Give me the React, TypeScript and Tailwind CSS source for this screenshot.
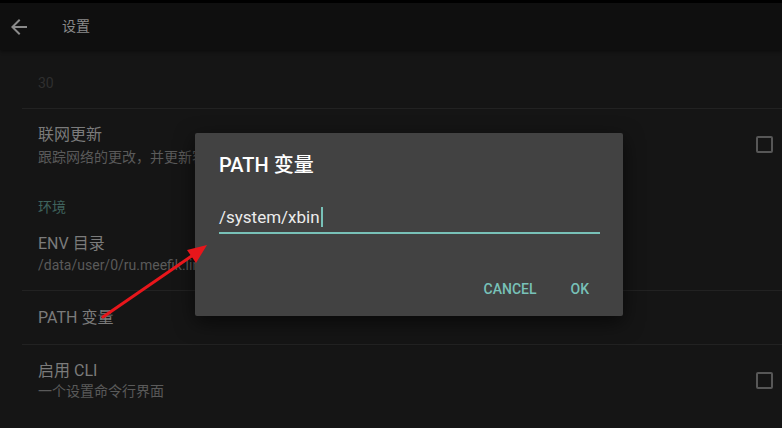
import React from 'react';

const rows = [
  { title: '联网更新', summary: '跟踪网络的更改，并更新容器配置', checkbox: true },
];

function Checkbox() {
  return <div className="mt-[27px] w-[17px] h-[17px] rounded-[2px] border-2 border-[#575757]"></div>;
}

export default function App() {
  return (
    <div className="relative w-[782px] h-[428px] overflow-hidden bg-[#151515] font-[Roboto,'Noto_Sans_CJK_SC',sans-serif]">
      {/* Toolbar */}
      <div className="h-[50px] border-t-[3px] border-black bg-[#0f0f0f] flex items-center shadow-[0_2px_3px_rgba(0,0,0,0.35)]">
        <svg className="ml-[7px]" width="24" height="24" viewBox="0 0 24 24" fill="#8a8a8a">
          <path d="M20 11H7.83l5.59-5.59L12 4l-8 8 8 8 1.41-1.41L7.83 13H20v-2z" />
        </svg>
        <span className="ml-[31px] text-[14px] text-[#8a8a8a]">设置</span>
      </div>

      {/* Preference list */}
      <div className="pl-[22px]">
        <div className="h-[58px] pl-[16px] pt-[23px] text-[14px] leading-[20px] text-[#2f2f2f]">30</div>
        <div className="h-px bg-[#222222]"></div>

        {rows.map((r) => (
          <div key={r.title} className="h-[75px] flex justify-between pr-[9px]">
            <div className="pl-[16px] pt-[16px]">
              <div className="text-[16px] leading-[20px] text-[#7b7b7b]">{r.title}</div>
              <div className="mt-[3px] w-[157px] overflow-hidden text-[14px] leading-[18px] text-[#5a5a5a] whitespace-nowrap">{r.summary}</div>
            </div>
            {r.checkbox && <Checkbox />}
          </div>
        ))}

        <div className="pl-[16px] pt-[14px] text-[14px] leading-[18px] text-[#3f635d]">环境</div>

        <div className="pl-[16px] pt-[18px] pb-[16px]">
          <div className="text-[16px] leading-[20px] text-[#7b7b7b]">ENV 目录</div>
          <div className="mt-[2px] w-[157px] overflow-hidden text-[14px] leading-[18px] text-[#5a5a5a] whitespace-nowrap">/data/user/0/ru.meefik.linuxdeploy/files/env</div>
        </div>
        <div className="h-px bg-[#222222]"></div>

        <div className="pl-[16px] pt-[17px] pb-[16px]">
          <div className="text-[16px] leading-[20px] text-[#7b7b7b]">PATH 变量</div>
        </div>
        <div className="h-px bg-[#222222]"></div>

        <div className="flex justify-between pr-[9px]">
          <div className="pl-[16px] pt-[16px]">
            <div className="text-[16px] leading-[20px] text-[#7b7b7b]">启用 CLI</div>
            <div className="mt-[1px] text-[14px] leading-[18px] text-[#5a5a5a]">一个设置命令行界面</div>
          </div>
          <Checkbox />
        </div>
      </div>

      {/* Dialog */}
      <div className="absolute left-[195px] top-[133px] w-[428px] h-[183px] rounded-[2px] bg-[#424242] shadow-[0_6px_20px_rgba(0,0,0,0.6)]">
        <div className="pl-[24px] pt-[18px] text-[20px] leading-[28px] font-medium text-white">PATH 变量</div>
        <div className="ml-[24px] mr-[23px] mt-[26px] pb-[3px] border-b-2 border-[#78c1b8] flex items-center h-[29px]">
          <span className="text-[17px] leading-[24px] text-[#ececec]">/system/xbin</span>
          <span className="inline-block w-[2px] h-[20px] bg-[#78c1b8] ml-[1px]"></span>
        </div>
        <div className="mt-[45px] flex justify-end gap-[34px] pr-[34px] text-[14px] leading-[20px] font-medium text-[#78c1b8]">
          <span>CANCEL</span>
          <span>OK</span>
        </div>
      </div>

      {/* Annotation arrow */}
      <svg className="absolute left-0 top-0 pointer-events-none" width="782" height="428" viewBox="0 0 782 428">
        <line x1="103" y1="317" x2="196" y2="253" stroke="#e8161b" strokeWidth="3" strokeLinecap="round" />
        <polygon points="207,245 187,250 196,263" fill="#e8161b" />
      </svg>
    </div>
  );
}
